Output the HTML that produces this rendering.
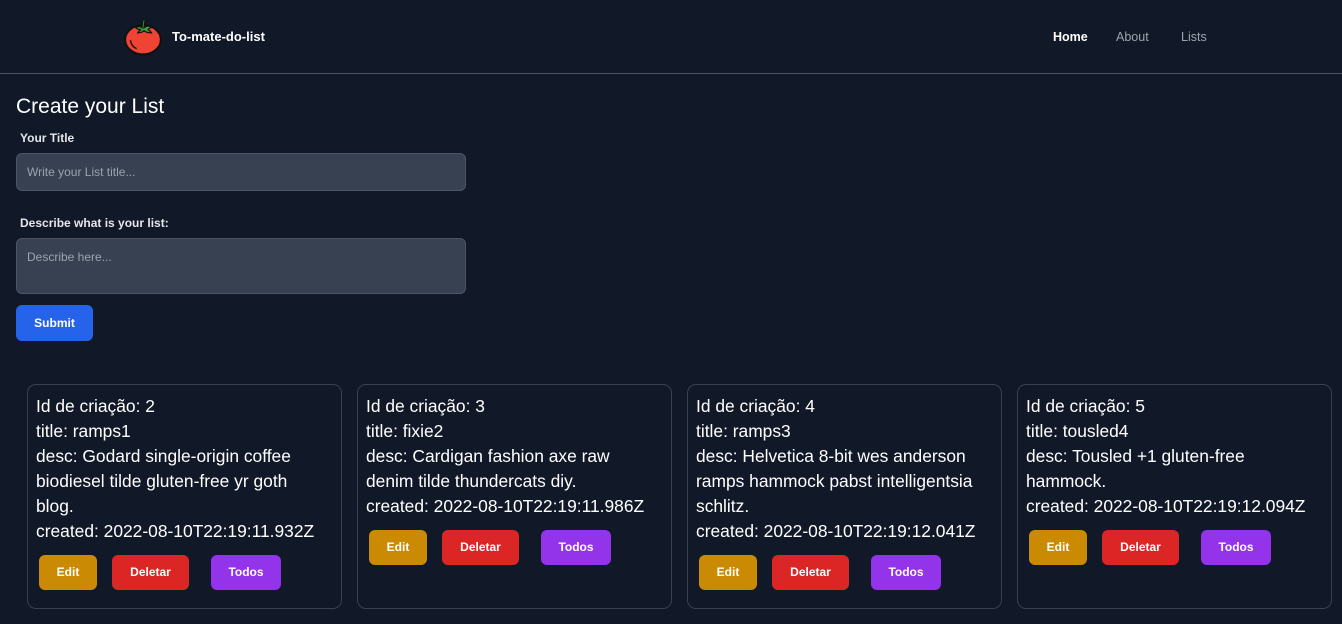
<!DOCTYPE html>
<html><head><style>
*{box-sizing:border-box;margin:0;padding:0}
body{width:1342px;height:624px;background:#111827;font-family:"Liberation Sans",sans-serif;color:#fff;position:relative;overflow:hidden}
.nav{position:absolute;left:0;top:0;width:1342px;height:74px;border-bottom:1px solid #4b5563}
.brand{position:absolute;left:172px;top:29px;font-size:13px;font-weight:bold}
.nl{position:absolute;top:30px;font-size:12.5px;color:#9ca3af}
h1{position:absolute;left:16px;top:95px;font-size:21px;font-weight:normal}
.lbl{position:absolute;left:20px;font-size:12px;font-weight:bold;color:#e5e7eb}
.inp{position:absolute;left:16px;width:450px;background:#374151;border:1px solid #4b5563;border-radius:6px;color:#9ca3af;font-size:12px;padding:11px 10px}
.sub{position:absolute;left:16px;top:305px;width:77px;height:36px;background:#2563eb;border-radius:6px;font-size:12px;font-weight:bold;text-align:center;line-height:36px}
.card{position:absolute;top:384px;width:315px;height:225px;border:1px solid #374151;border-radius:9px;padding:9px 8px;font-size:17.4px;line-height:25px}
.tx{width:285px}
.btns{position:relative;height:35px;margin-top:11px}
.b{position:absolute;top:0;height:35px;border-radius:6px;font-size:12px;font-weight:bold;text-align:center;line-height:35px}
.e{left:3px;width:58px;background:#ca8a04}
.d{left:76px;width:77px;background:#dc2626}
.t{left:175px;width:70px;background:#9333ea}
</style></head><body>
<div class="nav">
<svg style="position:absolute;left:123px;top:16px" width="40" height="40" viewBox="0 0 38 38"><ellipse cx="19" cy="22.5" rx="17" ry="14" fill="#ef4434" stroke="#111" stroke-width="2"/><path d="M7 23q1 6 6 8" stroke="#111" stroke-width="1.3" fill="none"/><path d="M12 11q4-2 6 0l1-8 2 1-1 7q4-3 7 0-3 1-3 2 2 1 3 3-5 0-7-2-2 2-6 2 1-2 3-3-3 0-5-2z" fill="#3a9b3a" stroke="#111" stroke-width="1.2"/></svg>
<div class="brand">To-mate-do-list</div>
<div class="nl" style="left:1053px;color:#fff;font-weight:bold">Home</div>
<div class="nl" style="left:1116px">About</div>
<div class="nl" style="left:1181px">Lists</div>
</div>
<h1>Create your List</h1>
<div class="lbl" style="top:131px">Your Title</div>
<div class="inp" style="top:153px;height:38px">Write your List title...</div>
<div class="lbl" style="top:216px">Describe what is your list:</div>
<div class="inp" style="top:238px;height:56px">Describe here...</div>
<div class="sub">Submit</div>

<div class="card" style="left:27px"><div class="tx">Id de criação: 2<br>title: ramps1<br>desc: Godard single-origin coffee biodiesel tilde gluten-free yr goth blog.<br>created: 2022-08-10T22:19:11.932Z</div><div class="btns"><div class="b e">Edit</div><div class="b d">Deletar</div><div class="b t">Todos</div></div></div>
<div class="card" style="left:357px"><div class="tx">Id de criação: 3<br>title: fixie2<br>desc: Cardigan fashion axe raw denim tilde thundercats diy.<br>created: 2022-08-10T22:19:11.986Z</div><div class="btns"><div class="b e">Edit</div><div class="b d">Deletar</div><div class="b t">Todos</div></div></div>
<div class="card" style="left:687px"><div class="tx">Id de criação: 4<br>title: ramps3<br>desc: Helvetica 8-bit wes anderson ramps hammock pabst intelligentsia schlitz.<br>created: 2022-08-10T22:19:12.041Z</div><div class="btns"><div class="b e">Edit</div><div class="b d">Deletar</div><div class="b t">Todos</div></div></div>
<div class="card" style="left:1017px"><div class="tx">Id de criação: 5<br>title: tousled4<br>desc: Tousled +1 gluten-free hammock.<br>created: 2022-08-10T22:19:12.094Z</div><div class="btns"><div class="b e">Edit</div><div class="b d">Deletar</div><div class="b t">Todos</div></div></div>
</body></html>
